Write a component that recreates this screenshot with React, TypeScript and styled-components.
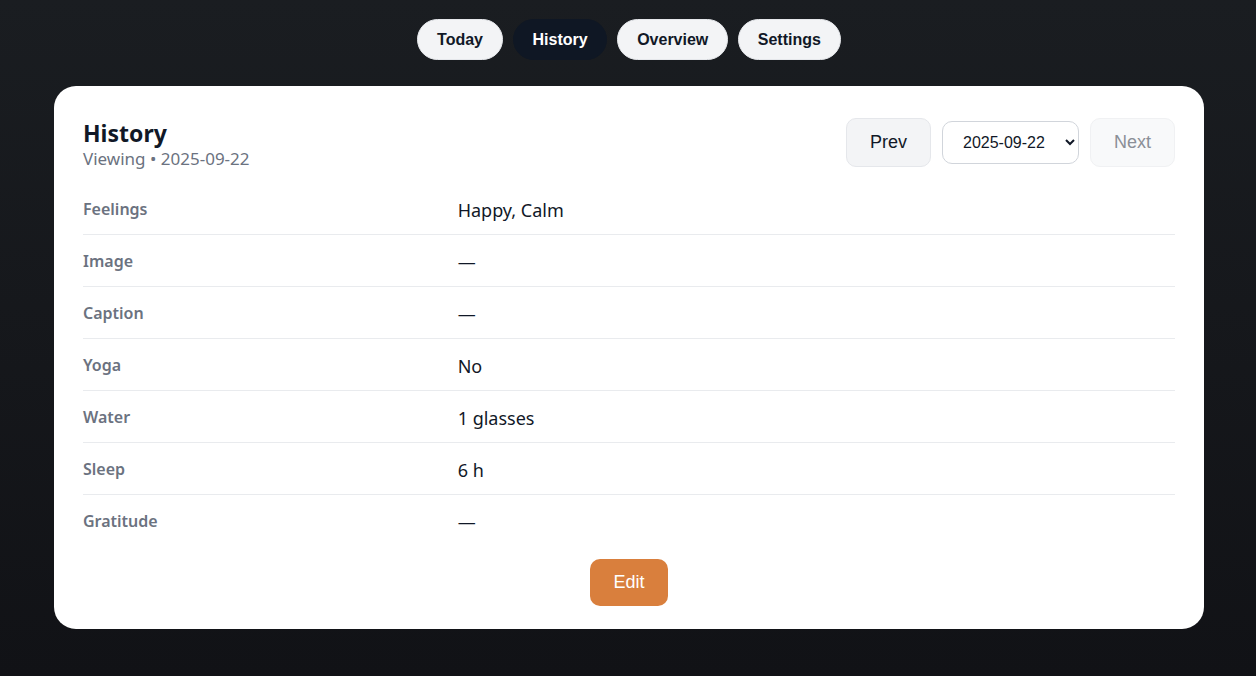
import React, { useState } from "react";
import styled, { createGlobalStyle } from "styled-components";

const Global = createGlobalStyle`
  html, body { margin: 0; padding: 0; }
  body {
    min-height: 676px;
    background: linear-gradient(180deg, #1a1d21 0%, #111216 100%);
    font-family: "Noto Sans", "Open Sans", sans-serif;
  }
`;

const Page = styled.div`
  display: flex;
  flex-direction: column;
  align-items: center;
  padding: 19px 52px 40px 54px;
  gap: 26px;
`;

const Nav = styled.nav`
  display: flex;
  gap: 10px;
`;

const Pill = styled.button<{ $active?: boolean }>`
  height: 41px;
  padding: 0 18.75px;
  border-radius: 999px;
  border: 1px solid ${(p) => (p.$active ? "#0f1724" : "#e5e7eb")};
  background: ${(p) => (p.$active ? "#0f1724" : "#f3f4f6")};
  color: ${(p) => (p.$active ? "#ffffff" : "#111827")};
  font-family: "Liberation Sans", Arial, sans-serif;
  font-weight: 700;
  font-size: 16px;
  cursor: pointer;
`;

const Card = styled.section`
  align-self: stretch;
  background: #ffffff;
  border-radius: 22px;
  padding: 32px 29px 23px 29px;
  display: flex;
  flex-direction: column;
`;

const Header = styled.header`
  display: flex;
  justify-content: space-between;
  align-items: flex-start;
  margin-bottom: 13px;
`;

const TitleBlock = styled.div`
  display: flex;
  flex-direction: column;
`;

const Title = styled.h1`
  margin: 0;
  font-size: 23px;
  line-height: 30px;
  font-weight: 700;
  color: #111827;
`;

const Sub = styled.div`
  font-size: 17px;
  line-height: 22px;
  color: #6b7280;
`;

const Controls = styled.div`
  display: flex;
  align-items: center;
  gap: 11px;
`;

const CtrlButton = styled.button<{ $disabled?: boolean }>`
  height: 49px;
  width: 85px;
  border-radius: 10px;
  border: 1px solid ${(p) => (p.$disabled ? "#f0f1f3" : "#e5e7eb")};
  background: ${(p) => (p.$disabled ? "#f8f9fa" : "#f3f4f6")};
  color: ${(p) => (p.$disabled ? "#8b8f97" : "#111827")};
  font-family: "Liberation Sans", Arial, sans-serif;
  font-size: 18px;
  cursor: ${(p) => (p.$disabled ? "default" : "pointer")};
`;

const Select = styled.select`
  height: 43px;
  width: 137px;
  padding: 0 6px 0 16px;
  border-radius: 10px;
  border: 1px solid #d1d5db;
  background: #ffffff;
  color: #111827;
  font-family: "Liberation Sans", Arial, sans-serif;
  font-size: 16px;
`;

const Rows = styled.div`
  display: flex;
  flex-direction: column;
`;

const Row = styled.div<{ $last?: boolean }>`
  display: grid;
  grid-template-columns: 1fr 2fr;
  gap: 16px;
  padding: 16px 0 12px;
  border-bottom: ${(p) => (p.$last ? "none" : "1px solid #e9ebee")};
  align-items: start;
`;

const Label = styled.div`
  font-size: 16px;
  line-height: 20px;
  font-weight: 600;
  color: #6b7280;
`;

const Value = styled.div`
  font-size: 18px;
  line-height: 23px;
  color: #111827;
`;

const Footer = styled.div`
  display: flex;
  justify-content: center;
  padding-top: 13px;
`;

const EditButton = styled.button`
  height: 47px;
  width: 78px;
  border: none;
  border-radius: 10px;
  background: #d97f3d;
  color: #ffffff;
  font-family: "Liberation Sans", Arial, sans-serif;
  font-size: 18px;
  cursor: pointer;
`;

const data: [string, string][] = [
  ["Feelings", "Happy, Calm"],
  ["Image", "—"],
  ["Caption", "—"],
  ["Yoga", "No"],
  ["Water", "1 glasses"],
  ["Sleep", "6 h"],
  ["Gratitude", "—"],
];

export default function App() {
  const [date, setDate] = useState("2025-09-22");
  return (
    <>
      <Global />
      <Page>
        <Nav>
          <Pill>Today</Pill>
          <Pill $active>History</Pill>
          <Pill>Overview</Pill>
          <Pill>Settings</Pill>
        </Nav>
        <Card>
          <Header>
            <TitleBlock>
              <Title>History</Title>
              <Sub>Viewing • {date}</Sub>
            </TitleBlock>
            <Controls>
              <CtrlButton>Prev</CtrlButton>
              <Select value={date} onChange={(e) => setDate(e.target.value)}>
                <option value="2025-09-22">2025-09-22</option>
                <option value="2025-09-21">2025-09-21</option>
              </Select>
              <CtrlButton $disabled disabled>
                Next
              </CtrlButton>
            </Controls>
          </Header>
          <Rows>
            {data.map(([k, v], i) => (
              <Row key={k} $last={i === data.length - 1}>
                <Label>{k}</Label>
                <Value>{v}</Value>
              </Row>
            ))}
          </Rows>
          <Footer>
            <EditButton>Edit</EditButton>
          </Footer>
        </Card>
      </Page>
    </>
  );
}
